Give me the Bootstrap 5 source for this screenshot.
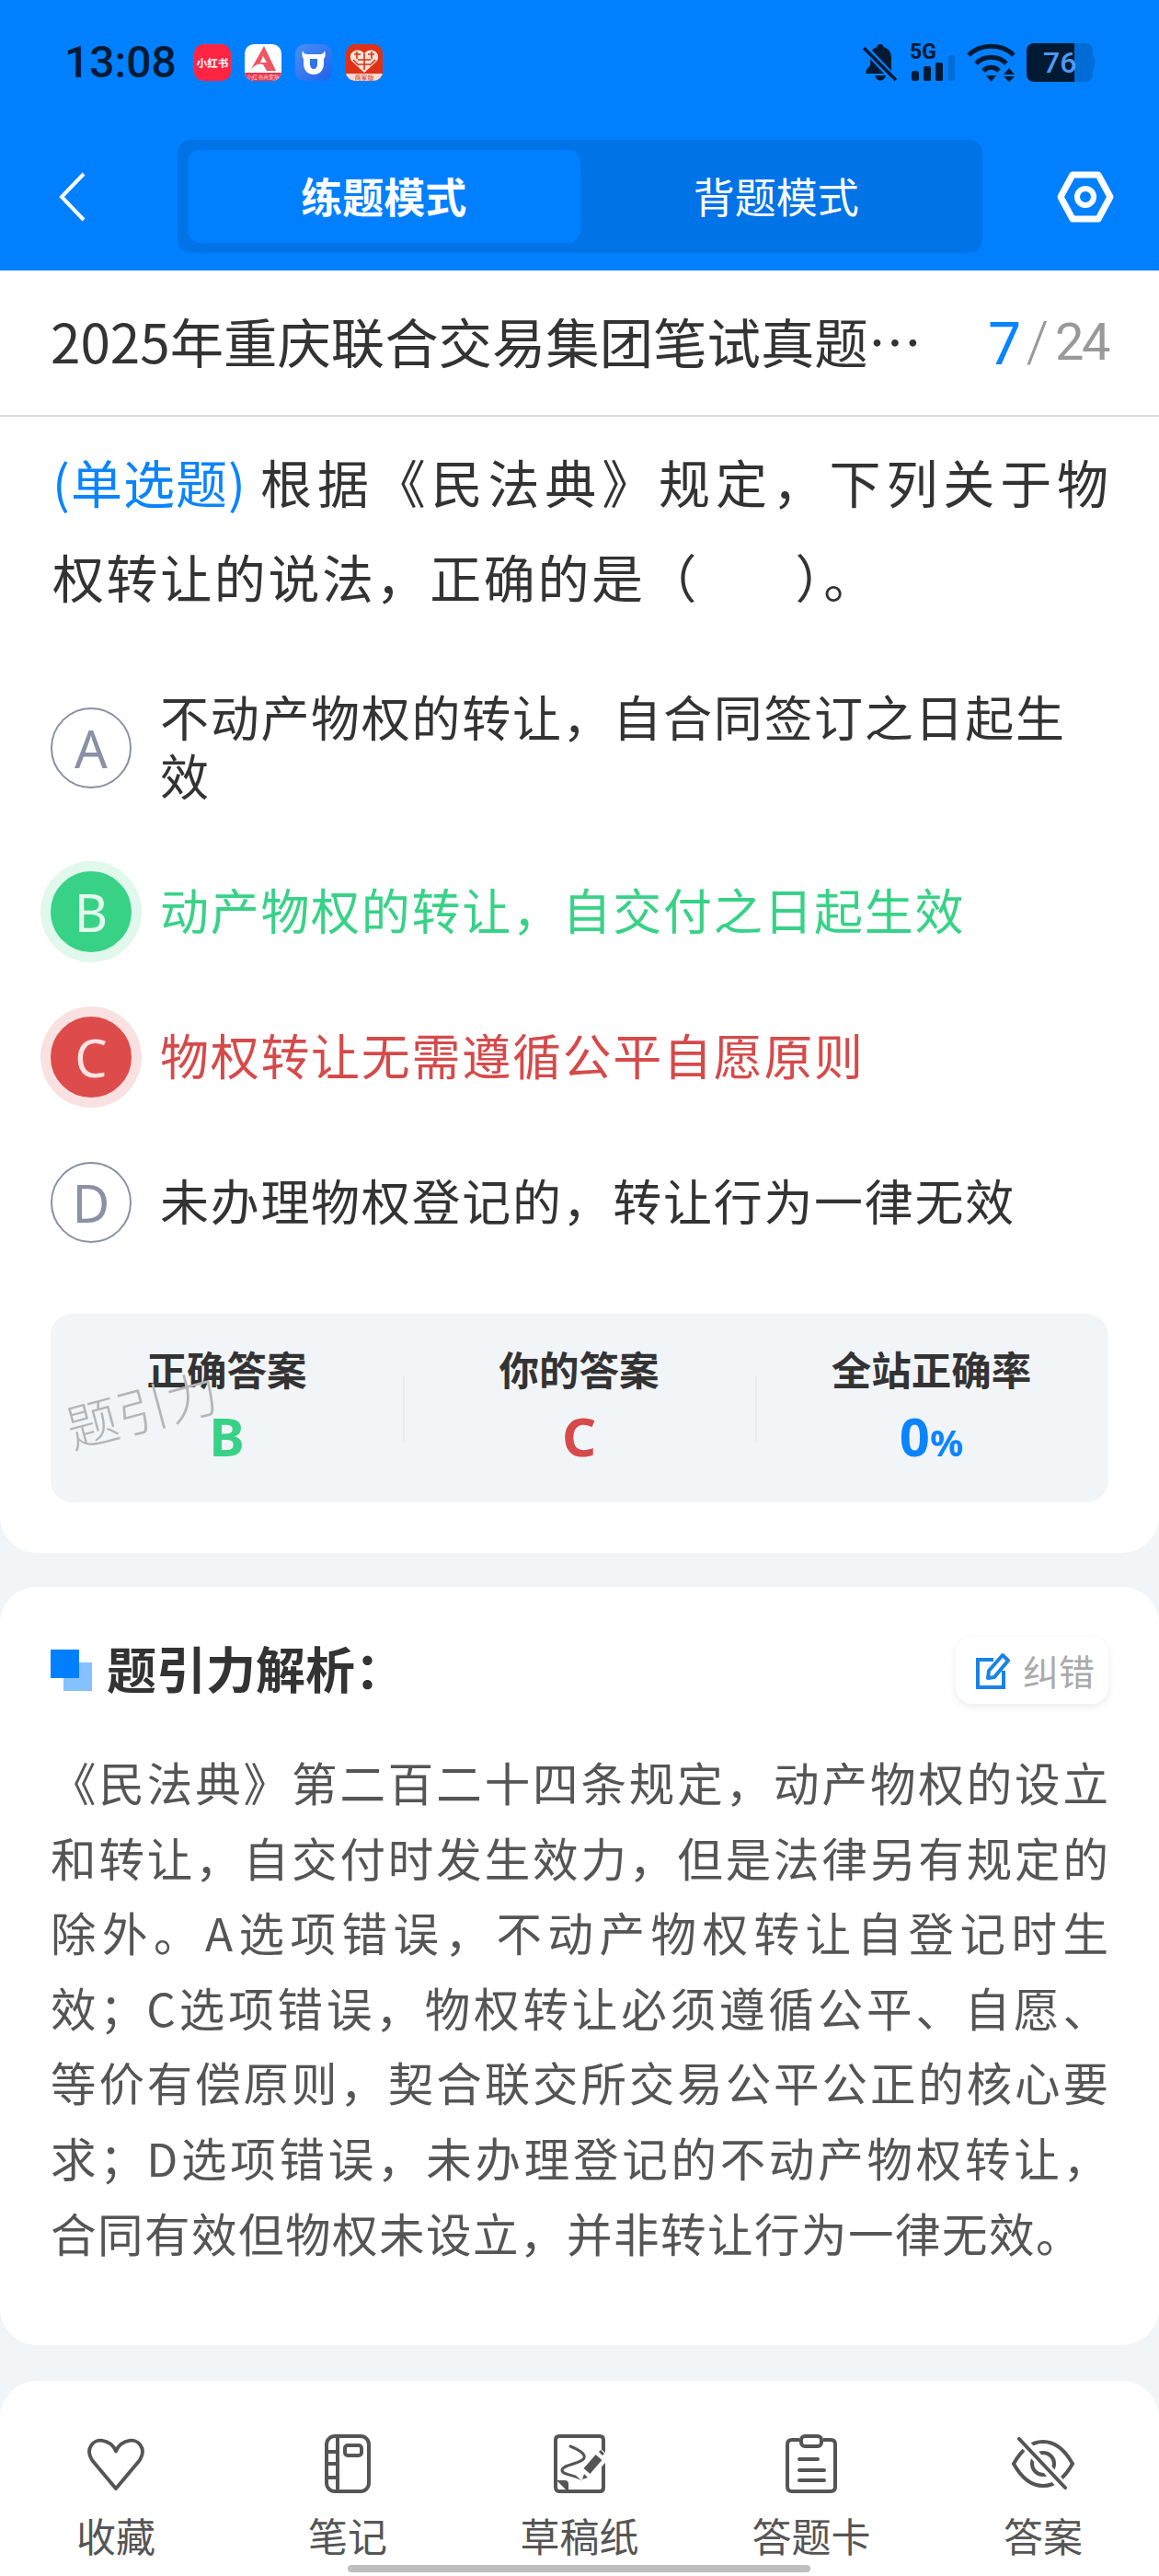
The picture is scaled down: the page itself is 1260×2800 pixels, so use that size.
<!DOCTYPE html>
<html lang="zh-CN">
<head>
  <meta charset="utf-8">
  <meta name="viewport" content="width=device-width, initial-scale=1">
  <title>练题模式</title>
  <link href="https://cdn.jsdelivr.net/npm/bootstrap@5.3.0/dist/css/bootstrap.min.css" rel="stylesheet">
  <style>
    html, body { margin: 0; }
    body { width: 1260px; height: 2800px; overflow: hidden; background: #f2f5f8; position: relative;
      font-family: "Noto Sans CJK SC", "Noto Sans", sans-serif; color: #333; }

    .app-head { background: #0080ff; height: 294px; }
    .status-row { height: 136px; padding: 47px 70px 0 70px; color: #001a33; }
    .clock { font-family: Roboto, sans-serif; font-weight: 500; font-size: 48px; line-height: 42px; width: 141px; }
    .app-row { gap: 15px; margin-top: 1px; }
    .app-icon { width: 40px; height: 40px; border-radius: 10px; overflow: hidden; flex: none; }
    .app-icon svg { display: block; }
    .icon-xhs { background: #ff2442; color: #fff; font-size: 11.5px; font-weight: 700; line-height: 40px; text-align: center; white-space: nowrap; }
    .stat-icons svg { display: block; }
    .ico-bell { margin-left: -1px; }
    .ico-sig { margin-left: 13px; margin-top: -8px; }
    .ico-wifi { margin-left: 12px; }
    .batt { width: 74px; height: 42px; position: relative; margin-left: 11px; }
    .batt-num { position: absolute; left: 18px; top: 0; font-family: Roboto, sans-serif; font-weight: 500; font-size: 32px; line-height: 43px; color: #4b9bf5; }

    .tool-row { height: 158px; padding: 16px 49px 19px 64px; }
    .back-ico { width: 129px; }
    .mode-box { width: 875px; height: 123px; background: #0073e6; border-radius: 14px; padding: 11px; }
    .mode-tab { flex: 1; border-radius: 14px; color: #fff; font-size: 45px; line-height: 99px; text-align: center; }
    .mode-tab.on { background: #0080ff; font-weight: 700; }

    .q-card { background: #fff; height: 1394px; border-radius: 0 0 40px 40px; }
    .title-row { height: 159px; padding: 0 55px 6px 55px; border-bottom: 2px solid #ddd; }
    .title-txt { font-size: 58.4px; white-space: nowrap; width: 960px; color: #333; }
    .page-box { padding-top: 5px; }
    .page-now { font-family: "Noto Sans", sans-serif; font-size: 64px; line-height: 80px; color: #0a84ff; }
    .page-sep { font-family: Roboto, sans-serif; font-weight: 300; font-size: 62px; line-height: 80px; color: #999; margin-left: 5px; }
    .page-all { font-family: Roboto, sans-serif; font-size: 56px; line-height: 80px; letter-spacing: -2.5px; color: #999; margin-left: 7px; }

    .q-body { padding: 18px 55px 0 57px; }
    .q-text { font-size: 56px; line-height: 103px; letter-spacing: 2.6px; margin: 0 -2.6px 0 0; color: #333; }
    .q-line { display: block; }
    .q-line.fill { text-align: justify; text-align-last: justify; }
    .q-type { display: inline-block; color: #0a84ff; letter-spacing: 1px; margin-right: 12px; }
    .opt-list { margin-top: 72px; gap: 70px; }
    .opt-row { min-height: 88px; }
    .opt-dot { width: 88px; height: 88px; border-radius: 50%; flex: none; font-family: "Noto Sans", sans-serif; font-size: 56px; line-height: 84px; text-align: center;
      border: 2px solid #8a90a5; color: #8a90a5; margin-right: 31px; background: #fff; margin-left: -2px; }
    .opt-txt { font-size: 53px; line-height: 64px; letter-spacing: 1.7px; margin-top: -3px; padding-bottom: 3px; }
    .opt-row.right .opt-dot { background: #38d287; border-color: #38d287; color: #e3f9ed; box-shadow: 0 0 0 11px #e1f8ec; }
    .opt-row.right .opt-txt { color: #38d287; }
    .opt-row.wrong .opt-dot { background: #de4b4b; border-color: #de4b4b; color: #fbe3e3; box-shadow: 0 0 0 11px #f9e1e1; }
    .opt-row.wrong .opt-txt { color: #d64a4a; }

    .score-box { background: #f2f5f8; border-radius: 24px; height: 205px; margin: 77px 55px 0 55px; position: relative; }
    .score-col { width: 383px; text-align: center; position: relative; padding-top: 30px; }
    .score-col + .score-col::before { content: ""; position: absolute; left: 0; top: 67px; height: 72px; border-left: 2px solid #e8ebee; }
    .score-lbl { font-size: 43.5px; font-weight: 700; line-height: 60px; color: #333; }
    .score-val { font-family: "Noto Sans", sans-serif; font-size: 58px; font-weight: 700; line-height: 74px; margin-top: 6px; }
    .score-val small { font-size: 40px; font-weight: 700; }
    .val-ok { color: #38d287; }
    .val-bad { color: #d64a4a; }
    .val-rate { color: #0a84ff; }
    .wm-text { position: absolute; left: 15px; top: 72px; font-size: 56px; line-height: 60px; font-weight: 300; color: #b5b5b5; transform: rotate(-15deg); white-space: nowrap; }

    .ana-card { background: #fff; margin-top: 37px; height: 824px; border-radius: 40px; padding: 54px 55px 0 55px; }
    .ana-mark { width: 45px; height: 45px; position: relative; flex: none; margin-right: 16px; }
    .ana-mark::before { content: ""; position: absolute; right: 0; bottom: 0; width: 31px; height: 31px; background: #85c1ff; }
    .ana-mark::after { content: ""; position: absolute; left: 0; top: 0; width: 31px; height: 31px; background: #0080ff; }
    .ana-title { font-size: 54px; font-weight: 700; line-height: 68px; color: #333; margin-top: -5px; }
    .fix-btn { width: 166px; height: 73px; border-radius: 18px; background: #fff; box-shadow: 0 3px 10px rgba(0, 0, 0, .08); font-size: 39px; color: #aaa; gap: 14px; padding-left: 6px; }
    .fix-btn svg { flex: none; }
    .ana-text { font-size: 49.5px; line-height: 81.6px; letter-spacing: 1.5px; text-align: justify; color: #555; margin: 44px -1.5px 0 0; }

    .foot-bar { background: #fff; height: 212px; margin-top: 39px; border-radius: 40px 40px 0 0; padding-top: 58px; }
    .foot-item { width: 252px; text-align: center; font-size: 43px; line-height: 60px; color: #555; }
    .foot-ico { height: 64px; margin-bottom: 15px; }
    .home-bar { position: absolute; left: 378px; top: 2788px; width: 503px; height: 8px; border-radius: 4px; background: #bfbfbf; }
  </style>
</head>
<body>
  <div class="app-head">
    <div class="status-row d-flex">
      <div class="clock">13:08</div>
      <div class="app-row d-flex">
        <div class="app-icon icon-xhs">小红书</div>
        <div class="app-icon">
          <svg width="40" height="40" viewBox="0 0 40 40">
            <rect width="40" height="40" fill="#fff"/>
            <path d="M0 31h40v9H0z" fill="#e8364a"/>
            <path d="M21 2 L7 27 Q14 20 20 22 L24 29 H34 Z" fill="#ef5563"/>
            <path d="M20 13 L24 20 L17 20 Z" fill="#fff"/>
            <text x="20" y="38" font-size="6" fill="#ffd5d8" text-anchor="middle">小红书商家版</text>
          </svg>
        </div>
        <div class="app-icon">
          <svg width="40" height="40" viewBox="0 0 40 40">
            <defs>
              <linearGradient id="cowBg" x1="0" y1="0" x2="1" y2="1">
                <stop offset="0" stop-color="#4b8ff5"/>
                <stop offset="1" stop-color="#1e62ea"/>
              </linearGradient>
            </defs>
            <rect width="40" height="40" fill="url(#cowBg)"/>
            <path d="M8 7 C9 10 11 11 13 11 H27 C29 11 31 10 32 7 C33 11 33 14 31 16 V21 C31 29 26 33 20 33 C14 33 9 29 9 21 V16 C7 14 7 11 8 7 Z" fill="#fff"/>
            <path d="M16 16 H24 V22 C24 25 22 27 20 27 C18 27 16 25 16 22 Z" fill="#2b74ee"/>
          </svg>
        </div>
        <div class="app-icon">
          <svg width="40" height="40" viewBox="0 0 40 40">
            <rect width="40" height="40" fill="#dd3218"/>
            <path d="M20 31 L6 18 C1 9 13 2 20 10 C27 2 39 9 34 18 Z" fill="#fbe4d8"/>
            <path d="M9 11h7M24 11h7M13 17h14M20 10v18M12 8v8M28 8v8M8 17l6 6M32 17l-6 6M14 22h12" stroke="#dd3218" stroke-width="1.600" fill="none"/>
            <path d="M0 32h40v8H0z" fill="#fbd9d0"/>
            <text x="20" y="39" font-size="7" fill="#c8402c" text-anchor="middle">商家版</text>
          </svg>
        </div>
      </div>
      <div class="stat-icons d-flex ms-auto">
        <svg class="ico-bell" width="38" height="42" viewBox="0 0 38 42">
          <path d="M19 1c-2.400 0-3.500 1.600-3.800 3.200C9.800 5.800 8 10 8 15v9l-4.500 5.500V33h27.500V14C30 8 27 5.400 22.800 4.200 22.500 2.600 21.400 1 19 1z" fill="#001a33"/>
          <path d="M13 35h12c-.8 3.500-3 5.500-6 5.500s-5.200-2-6-5.500z" fill="#001a33"/>
          <path d="M1 4 L36 41" stroke="#0080ff" stroke-width="8"/>
          <path d="M1 5 L36 40" stroke="#001a33" stroke-width="3.500"/>
        </svg>
        <svg class="ico-sig" width="50" height="50" viewBox="0 -8 50 50">
          <text x="0" y="17" font-family="Roboto, sans-serif" font-weight="700" font-size="23" fill="#001a33">5G</text>
          <rect x="2" y="30" width="8" height="11" rx="3" fill="#001a33"/>
          <rect x="15" y="25" width="8" height="16" rx="2" fill="#001a33"/>
          <rect x="28" y="21" width="8" height="20" rx="2" fill="#001a33"/>
          <rect x="42" y="13" width="7" height="28" rx="2" fill="#006cd6"/>
        </svg>
        <svg class="ico-wifi" width="54" height="42" viewBox="0 0 54 42">
          <path d="M2 13 C15 0 38 0 51 13" stroke="#001a33" stroke-width="5" fill="none"/>
          <path d="M10 22 C19 13 34 13 43 22" stroke="#001a33" stroke-width="5" fill="none"/>
          <path d="M18 30 C23 25 30 25 35 30" stroke="#001a33" stroke-width="5" fill="none"/>
          <path d="M21 35h11l-5.500 7z" fill="#001a33"/>
          <path d="M46 27l6 7H40zM40 36h12l-6 6z" fill="#001a33"/>
        </svg>
        <div class="batt">
          <svg width="74" height="42" viewBox="0 0 74 42">
            <path d="M52 0h12a8 8 0 0 1 8 8v26a8 8 0 0 1-8 8H52z" fill="#006cd6"/>
            <rect x="70" y="14" width="4" height="14" rx="2" fill="#006cd6"/>
            <path d="M8 0h44v42H8a8 8 0 0 1-8-8V8a8 8 0 0 1 8-8z" fill="#001a33"/>
          </svg>
          <span class="batt-num">76</span>
        </div>
      </div>
    </div>
    <div class="tool-row d-flex align-items-center">
      <div class="back-ico">
        <svg width="30" height="54" viewBox="0 0 30 54" class="d-block">
          <path d="M27 2 L3 27 L27 52" stroke="#fff" stroke-width="4" fill="none"/>
        </svg>
      </div>
      <div class="mode-box d-flex">
        <div class="mode-tab on">练题模式</div>
        <div class="mode-tab">背题模式</div>
      </div>
      <div class="ms-auto">
        <svg width="62" height="56" viewBox="0 0 62 56" class="d-block">
          <path d="M17 4 H45 L58 28 L45 52 H17 L4 28 Z" stroke="#fff" stroke-width="7" stroke-linejoin="round" fill="none"/>
          <circle cx="31" cy="28" r="9" stroke="#fff" stroke-width="6" fill="none"/>
        </svg>
      </div>
    </div>
  </div>

  <div class="q-card">
    <div class="title-row d-flex align-items-center">
      <div class="title-txt">2025年重庆联合交易集团笔试真题…</div>
      <div class="page-box ms-auto d-flex align-items-center">
        <span class="page-now">7</span><span class="page-sep">/</span><span class="page-all">24</span>
      </div>
    </div>
    <div class="q-body">
      <p class="q-text">
        <span class="q-line fill"><span class="q-type">(单选题)</span><span>根据《民法典》规定，下列关于物</span></span>
        <span class="q-line">权转让的说法，正确的是（&emsp;&ensp;&nbsp;）。</span>
      </p>
      <div class="opt-list d-flex flex-column">
        <div class="opt-row d-flex align-items-center">
          <div class="opt-dot">A</div>
          <div class="opt-txt">不动产物权的转让，自合同签订之日起生效</div>
        </div>
        <div class="opt-row right d-flex align-items-center">
          <div class="opt-dot">B</div>
          <div class="opt-txt">动产物权的转让，自交付之日起生效</div>
        </div>
        <div class="opt-row wrong d-flex align-items-center">
          <div class="opt-dot">C</div>
          <div class="opt-txt">物权转让无需遵循公平自愿原则</div>
        </div>
        <div class="opt-row d-flex align-items-center">
          <div class="opt-dot">D</div>
          <div class="opt-txt">未办理物权登记的，转让行为一律无效</div>
        </div>
      </div>
    </div>
    <div class="score-box d-flex">
      <div class="score-col">
        <div class="score-lbl">正确答案</div>
        <div class="score-val val-ok">B</div>
      </div>
      <div class="score-col">
        <div class="score-lbl">你的答案</div>
        <div class="score-val val-bad">C</div>
      </div>
      <div class="score-col">
        <div class="score-lbl">全站正确率</div>
        <div class="score-val val-rate">0<small>%</small></div>
      </div>
      <div class="wm-text">题引力</div>
    </div>
  </div>

  <div class="ana-card">
    <div class="d-flex align-items-center">
      <div class="ana-mark"></div>
      <div class="ana-title">题引力解析：</div>
      <div class="fix-btn ms-auto d-flex align-items-center justify-content-center">
        <svg width="38" height="42" viewBox="0 0 38 42">
          <path d="M20 9 H3 V39 H31 V21" stroke="#1a82e8" stroke-width="4" fill="none"/>
          <path d="M14 29 L15 21 L30 4 L36 10 L21 28 Z" stroke="#1a82e8" stroke-width="4" stroke-linejoin="round" fill="none"/>
        </svg>
        <span>纠错</span>
      </div>
    </div>
    <p class="ana-text">《民法典》第二百二十四条规定，动产物权的设立和转让，自交付时发生效力，但是法律另有规定的除外。A选项错误，不动产物权转让自登记时生效；C选项错误，物权转让必须遵循公平、自愿、等价有偿原则，契合联交所交易公平公正的核心要求；D选项错误，未办理登记的不动产物权转让，合同有效但物权未设立，并非转让行为一律无效。</p>
  </div>

  <div class="foot-bar d-flex">
    <div class="foot-item">
      <div class="foot-ico d-flex justify-content-center align-items-center">
        <svg width="66" height="60" viewBox="0 2 66 62">
          <path d="M33 61 L7 30 C-3 15 9 5 18 7 C25 8 31 13 33 19 C35 13 41 8 48 7 C57 5 69 15 59 30 Z" stroke="#555" stroke-width="4" stroke-linejoin="round" fill="none"/>
        </svg>
      </div>
      收藏
    </div>
    <div class="foot-item">
      <div class="foot-ico d-flex justify-content-center align-items-center">
        <svg width="50" height="64" viewBox="0 0 50 64">
          <rect x="2" y="2" width="46" height="60" rx="9" stroke="#555" stroke-width="4" fill="none"/>
          <path d="M14 2v60M2 19h12M2 32h12M2 47h12" stroke="#555" stroke-width="4" fill="none"/>
          <rect x="22" y="12" width="18" height="11" rx="3" stroke="#555" stroke-width="4" fill="none"/>
        </svg>
      </div>
      笔记
    </div>
    <div class="foot-item">
      <div class="foot-ico d-flex justify-content-center align-items-center">
        <svg width="56" height="64" viewBox="0 0 56 64">
          <path d="M17 62 H6 Q2 62 2 57 V6 Q2 2 6 2 H50 Q54 2 54 6 V58 Q54 62 50 62 H17 Z" stroke="#555" stroke-width="4" fill="none"/>
          <path d="M3 50 H12 Q16 50 16 54 V63 Z" fill="#555"/>
          <path d="M18 13 C26 16 35 21 33 26 C30 32 9 33 9 39 C9 44 22 44 31 49" stroke="#555" stroke-width="3" stroke-linecap="round" fill="none"/>
          <path d="M56 20 L30 50" stroke="#fff" stroke-width="14"/>
          <path d="M49 25 L36 40" stroke="#555" stroke-width="9"/>
          <path d="M33 43 L31 49 L37 47 Z" fill="#555"/>
          <path d="M50 18 L54 22" stroke="#555" stroke-width="3"/>
        </svg>
      </div>
      草稿纸
    </div>
    <div class="foot-item">
      <div class="foot-ico d-flex justify-content-center align-items-center">
        <svg width="56" height="64" viewBox="0 0 56 64">
          <path d="M15 6 H7 Q2 6 2 11 V57 Q2 62 7 62 H49 Q54 62 54 57 V11 Q54 6 49 6 H41" stroke="#555" stroke-width="4" fill="none"/>
          <rect x="17" y="2" width="22" height="11" rx="4" stroke="#555" stroke-width="4" fill="none"/>
          <path d="M15 27h20M15 39h27M15 50h27" stroke="#555" stroke-width="4" stroke-linecap="round" fill="none"/>
        </svg>
      </div>
      答题卡
    </div>
    <div class="foot-item">
      <div class="foot-ico d-flex justify-content-center align-items-center">
        <svg width="70" height="58" viewBox="0 0 70 58">
          <path d="M3 29 C13 11 25 5 35 5 C45 5 57 11 67 29 C57 47 45 53 35 53 C25 53 13 47 3 29 Z" stroke="#555" stroke-width="4" fill="none"/>
          <circle cx="35" cy="29" r="12" stroke="#555" stroke-width="4" fill="none"/>
          <path d="M8 -1 L60 58" stroke="#fff" stroke-width="11"/>
          <path d="M9 2 L59 55" stroke="#555" stroke-width="4" stroke-linecap="round"/>
        </svg>
      </div>
      答案
    </div>
  </div>
  <div class="home-bar"></div>
</body>
</html>
